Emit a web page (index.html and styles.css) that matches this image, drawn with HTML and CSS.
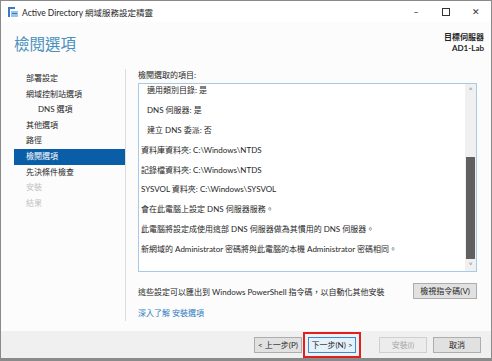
FILE: index.html
```html
<!DOCTYPE html>
<html lang="zh-Hant">
<head>
    <meta charset="UTF-8">
    <title>Active Directory 網域服務設定精靈</title>
    <link rel="stylesheet" href="styles.css">
</head>
<body>
    <div class="window">
        <header class="titlebar">
            <svg class="app-icon" width="12" height="12" viewBox="0 0 12 12">
                <rect x="1" y="1" width="2" height="10" fill="#3a78c8"/>
                <rect x="1" y="1" width="7" height="2" fill="#3a78c8"/>
                <rect x="4" y="5" width="7" height="6" fill="#9cc4ea"/>
                <rect x="5" y="7" width="5" height="1" fill="#3a78c8"/>
            </svg>
            <span class="title-text">Active Directory 網域服務設定精靈</span>
            <div class="win-controls">
                <span class="win-btn">&#x2013;</span>
                <span class="win-btn"><span class="max-box"></span></span>
                <span class="win-btn">&#x2715;</span>
            </div>
        </header>

        <div class="page-head">
            <h1 class="page-title">檢閱選項</h1>
            <div class="target">
                <div>目標伺服器</div>
                <div>AD1-Lab</div>
            </div>
        </div>

        <div class="main">
            <nav class="steps">
                <ul>
                    <li>部署設定</li>
                    <li>網域控制站選項</li>
                    <li class="sub">DNS 選項</li>
                    <li>其他選項</li>
                    <li>路徑</li>
                    <li class="active">檢閱選項</li>
                    <li>先決條件檢查</li>
                    <li class="off">安裝</li>
                    <li class="off">結果</li>
                </ul>
            </nav>

            <section class="content">
                <p class="label">檢閱選取的項目:</p>
                <div class="review-box">
                    <div class="review-lines">
                        <p class="ind">適用類別目錄: 是</p>
                        <p class="ind">DNS 伺服器: 是</p>
                        <p class="ind">建立 DNS 委派: 否</p>
                        <p>資料庫資料夾: C:\Windows\NTDS</p>
                        <p>記錄檔資料夾: C:\Windows\NTDS</p>
                        <p>SYSVOL 資料夾: C:\Windows\SYSVOL</p>
                        <p>會在此電腦上設定 DNS 伺服器服務。</p>
                        <p>此電腦將設定成使用這部 DNS 伺服器做為其慣用的 DNS 伺服器。</p>
                        <p>新網域的 Administrator 密碼將與此電腦的本機 Administrator 密碼相同。</p>
                    </div>
                    <div class="scrollbar">
                        <span class="arrow">&#x2c4;</span>
                        <div class="track"><div class="thumb"></div></div>
                        <span class="arrow">&#x2c5;</span>
                    </div>
                </div>
                <div class="export-row">
                    <span>這些設定可以匯出到 Windows PowerShell 指令碼，以自動化其他安裝</span>
                    <button type="button" class="btn">檢視指令碼(V)</button>
                </div>
                <a class="more-link" href="#">深入了解 安裝選項</a>
            </section>
        </div>

        <footer class="footer">
            <button type="button" class="btn">&lt; 上一步(P)</button>
            <span class="highlight"><button type="button" class="btn default">下一步(N) &gt;</button></span>
            <button type="button" class="btn gap" disabled>安裝(I)</button>
            <button type="button" class="btn">取消</button>
        </footer>
    </div>
</body>
</html>
```

FILE: styles.css
```css
:root {
    --text-color: #262626;
    --title-blue: #4a90bd;
    --select-blue: #0a5ea8;
    --box-border: #a9c9e8;
    --line-color: #dcdcdc;
    --footer-bg: #f0f0f0;
}

* {
    box-sizing: border-box;
}

body {
    margin: 0;
    font-family: Lato, "Noto Sans CJK TC", sans-serif;
    font-size: 8px;
    color: var(--text-color);
    background: #fff;
}

p {
    margin: 0;
}

.window {
    width: 492px;
    height: 361px;
    display: flex;
    flex-direction: column;
    border: 1px solid #8a8a8a;
    border-bottom-width: 3px;
    background: #fcfcfc;
}

.titlebar {
    height: 21px;
    display: flex;
    align-items: center;
    padding-left: 6px;
    background: #fff;
}

.app-icon {
    margin-right: 3px;
}

.title-text {
    font-size: 8.5px;
}

.win-controls {
    margin-left: auto;
    display: flex;
    height: 100%;
}

.win-btn {
    width: 30px;
    display: flex;
    align-items: center;
    justify-content: center;
    font-size: 9px;
    color: #333;
}

.max-box {
    width: 8px;
    height: 8px;
    border: 1px solid #333;
}

.page-head {
    height: 47px;
    display: flex;
    justify-content: space-between;
    padding: 9px 7px 0 13px;
}

.page-title {
    margin: 0;
    font-size: 15.5px;
    font-weight: normal;
    color: var(--title-blue);
    line-height: 26px;
}

.target {
    text-align: right;
    font-weight: bold;
    line-height: 11px;
    padding-top: 1px;
}

.main {
    flex: 1;
    display: flex;
}

.steps {
    width: 125px;
    margin-bottom: 10px;
    border-right: 1px solid var(--line-color);
}

.steps ul {
    list-style: none;
    margin: 2px 0 0 13px;
    padding: 0;
}

.steps li {
    height: 15.6px;
    line-height: 15.6px;
    padding-left: 12px;
}

.steps li.sub {
    padding-left: 24px;
}

.steps li.active {
    background: var(--select-blue);
    color: #fff;
}

.steps li.off {
    color: #c2c2c2;
}

.content {
    flex: 1;
    padding: 0 14px 0 12px;
}

.label {
    line-height: 12px;
}

.review-box {
    height: 189px;
    display: flex;
    border: 1px solid var(--box-border);
    background: #fff;
    margin-top: 2px;
}

.review-lines {
    flex: 1;
    overflow: hidden;
    padding-left: 2px;
}

.review-lines p {
    height: 19.9px;
    line-height: 12px;
    white-space: nowrap;
}

.review-lines p.ind {
    padding-left: 6px;
}

.scrollbar {
    width: 11px;
    display: flex;
    flex-direction: column;
    background: #f0f0f0;
}

.arrow {
    height: 12px;
    text-align: center;
    font-size: 8px;
    line-height: 12px;
    color: #777;
}

.track {
    flex: 1;
    display: flex;
    flex-direction: column;
    justify-content: flex-end;
}

.thumb {
    height: 102px;
    background: #606060;
    margin: 0 1px;
}

.export-row {
    display: flex;
    justify-content: space-between;
    align-items: center;
    margin-top: 11px;
}

.btn {
    font-family: inherit;
    font-size: 8px;
    color: var(--text-color);
    background: #e1e1e1;
    border: 1px solid #adadad;
    height: 16px;
    padding: 0 6px;
    line-height: 14px;
}

.btn:disabled {
    color: #a8a8a8;
    background: #ececec;
    border-color: #cfcfcf;
}

.more-link {
    display: inline-block;
    margin-top: 8px;
    color: #2f7bbf;
    text-decoration: none;
}

.footer {
    height: 27px;
    display: flex;
    align-items: center;
    justify-content: flex-end;
    gap: 6px;
    padding-right: 10px;
    background: var(--footer-bg);
}

.footer .btn {
    width: 48px;
    padding: 0;
}

.highlight {
    display: flex;
    padding: 3px;
    border: 2px solid #e02020;
    margin: 0 -5px;
}

.btn.default {
    border-color: #3c8ad6;
    background: #e5f1fb;
}

.btn.gap {
    margin-left: 17px;
}
```
